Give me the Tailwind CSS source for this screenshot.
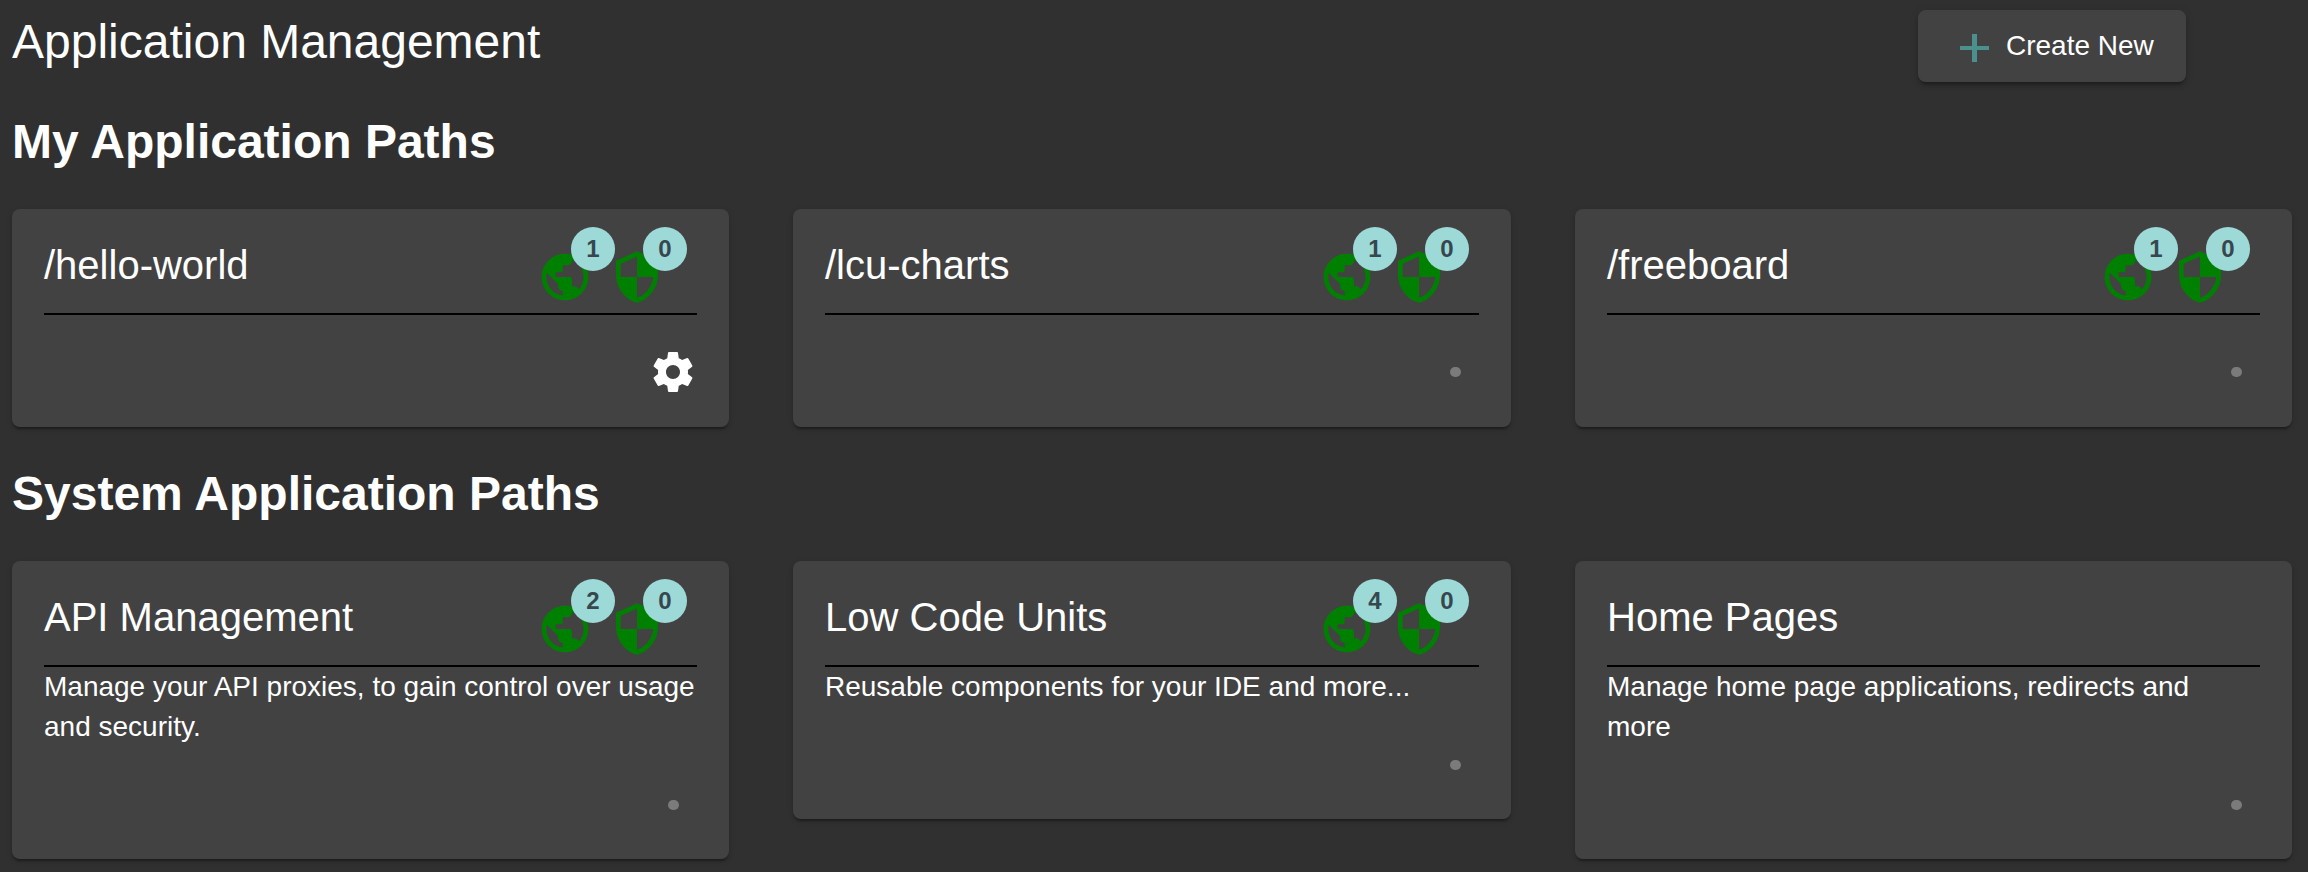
<!DOCTYPE html>
<html lang="en">
<head>
<meta charset="utf-8">
<title>Application Management</title>
<script src="https://cdn.jsdelivr.net/npm/@tailwindcss/browser@4"></script>
</head>
<body class="h-[872px] overflow-hidden bg-[#303030] font-['Liberation_Sans',Arial,sans-serif] text-white">
<svg class="hidden">
  <symbol id="globe" viewBox="0 0 24 24"><path d="M12 2C6.48 2 2 6.48 2 12s4.48 10 10 10 10-4.48 10-10S17.52 2 12 2zm-1 17.93c-3.95-.49-7-3.85-7-7.93 0-.62.08-1.21.21-1.79L9 15v1c0 1.1.9 2 2 2v1.93zm6.9-2.54c-.26-.81-1-1.39-1.9-1.39h-1v-3c0-.55-.45-1-1-1H8v-2h2c.55 0 1-.45 1-1V7h2c1.1 0 2-.9 2-2v-.41c2.93 1.19 5 4.06 5 7.41 0 2.08-.8 3.97-2.1 5.39z"/></symbol>
  <symbol id="shield" viewBox="0 0 24 24"><path d="M12 1L3 5v6c0 5.55 3.84 10.74 9 12 5.16-1.26 9-6.45 9-12V5l-9-4zm0 10.99h7c-.53 4.12-3.28 7.79-7 8.94V12H5V6.3l7-3.11v8.8z"/></symbol>
  <symbol id="gear" viewBox="0 0 24 24"><path d="M19.43 12.98c.04-.32.07-.64.07-.98s-.03-.66-.07-.98l2.11-1.65c.19-.15.24-.42.12-.64l-2-3.46c-.12-.22-.39-.3-.61-.22l-2.49 1c-.52-.4-1.08-.73-1.69-.98l-.38-2.65C14.46 2.18 14.25 2 14 2h-4c-.25 0-.46.18-.49.42l-.38 2.65c-.61.25-1.17.59-1.69.98l-2.49-1c-.23-.09-.49 0-.61.22l-2 3.46c-.13.22-.07.49.12.64l2.11 1.65c-.04.32-.07.65-.07.98s.03.66.07.98l-2.11 1.65c-.19.15-.24.42-.12.64l2 3.46c.12.22.39.3.61.22l2.49-1c.52.4 1.08.73 1.69.98l.38 2.65c.03.24.24.42.49.42h4c.25 0 .46-.18.49-.42l.38-2.65c.61-.25 1.17-.59 1.69-.98l2.49 1c.23.09.49 0 .61-.22l2-3.46c.12-.22.07-.49-.12-.64l-2.11-1.65zM12 15.5c-1.93 0-3.5-1.57-3.5-3.5s1.57-3.5 3.5-3.5 3.5 1.57 3.5 3.5-1.57 3.5-3.5 3.5z"/></symbol>
</svg>

<header class="flex h-[82px] items-start justify-between pt-[10px] pr-[122px] pl-3">
  <h1 class="pt-[4px] text-[48px] leading-[56px]">Application Management</h1>
  <button class="flex h-[72px] w-[268px] items-center rounded-lg bg-[#424242] pl-[42px] text-[28px] leading-[72px] shadow-[0_6px_2px_-4px_rgba(0,0,0,0.2),0_4px_4px_0_rgba(0,0,0,0.14),0_2px_10px_0_rgba(0,0,0,0.12)]">
    <svg class="mt-[4px] h-7 w-[29px] fill-[#4a918e]" viewBox="0 0 29 28"><path d="M12 0h5v12h12v4H17v12h-5V16H0v-4h12z"/></svg>
    <span class="ml-[17px]">Create New</span>
  </button>
</header>

<h2 class="mt-8 pl-3 text-[48px] leading-[56px] font-bold">My Application Paths</h2>
<section class="mt-[39px] ml-3 grid grid-cols-[717px_718px_717px] items-start gap-x-16">
  <article class="h-[218px] rounded-lg bg-[#424242] px-8 shadow-[0_4px_2px_-2px_rgba(0,0,0,0.2),0_2px_2px_0_rgba(0,0,0,0.14),0_2px_6px_0_rgba(0,0,0,0.12)]">
    <div class="flex h-[106px] justify-between border-b-2 border-black">
      <h3 class="pt-8 text-[40px] leading-[48px]">/hello-world</h3>
      <div class="flex gap-4 pt-10 pr-8">
        <div class="relative size-14"><svg class="size-14 fill-[#008000]"><use href="#globe"/></svg><span class="absolute -top-[22px] -right-[22px] size-11 rounded-full bg-[#9dd9d7] text-center text-[24px] leading-[44px] font-bold text-[#37474f]">1</span></div>
        <div class="relative size-14"><svg class="size-14 fill-[#008000]"><use href="#shield"/></svg><span class="absolute -top-[22px] -right-[22px] size-11 rounded-full bg-[#9dd9d7] text-center text-[24px] leading-[44px] font-bold text-[#37474f]">0</span></div>
      </div>
    </div>
    <div class="flex justify-end pt-[33px]"><svg class="size-12 fill-white"><use href="#gear"/></svg></div>
  </article>
  <article class="h-[218px] rounded-lg bg-[#424242] px-8 shadow-[0_4px_2px_-2px_rgba(0,0,0,0.2),0_2px_2px_0_rgba(0,0,0,0.14),0_2px_6px_0_rgba(0,0,0,0.12)]">
    <div class="flex h-[106px] justify-between border-b-2 border-black">
      <h3 class="pt-8 text-[40px] leading-[48px]">/lcu-charts</h3>
      <div class="flex gap-4 pt-10 pr-8">
        <div class="relative size-14"><svg class="size-14 fill-[#008000]"><use href="#globe"/></svg><span class="absolute -top-[22px] -right-[22px] size-11 rounded-full bg-[#9dd9d7] text-center text-[24px] leading-[44px] font-bold text-[#37474f]">1</span></div>
        <div class="relative size-14"><svg class="size-14 fill-[#008000]"><use href="#shield"/></svg><span class="absolute -top-[22px] -right-[22px] size-11 rounded-full bg-[#9dd9d7] text-center text-[24px] leading-[44px] font-bold text-[#37474f]">0</span></div>
      </div>
    </div>
    <div class="flex justify-end pt-[52px] pr-[18px]"><span class="h-2.5 w-[11px] rounded-full bg-[#7b7b7b]"></span></div>
  </article>
  <article class="h-[218px] rounded-lg bg-[#424242] px-8 shadow-[0_4px_2px_-2px_rgba(0,0,0,0.2),0_2px_2px_0_rgba(0,0,0,0.14),0_2px_6px_0_rgba(0,0,0,0.12)]">
    <div class="flex h-[106px] justify-between border-b-2 border-black">
      <h3 class="pt-8 text-[40px] leading-[48px]">/freeboard</h3>
      <div class="flex gap-4 pt-10 pr-8">
        <div class="relative size-14"><svg class="size-14 fill-[#008000]"><use href="#globe"/></svg><span class="absolute -top-[22px] -right-[22px] size-11 rounded-full bg-[#9dd9d7] text-center text-[24px] leading-[44px] font-bold text-[#37474f]">1</span></div>
        <div class="relative size-14"><svg class="size-14 fill-[#008000]"><use href="#shield"/></svg><span class="absolute -top-[22px] -right-[22px] size-11 rounded-full bg-[#9dd9d7] text-center text-[24px] leading-[44px] font-bold text-[#37474f]">0</span></div>
      </div>
    </div>
    <div class="flex justify-end pt-[52px] pr-[18px]"><span class="h-2.5 w-[11px] rounded-full bg-[#7b7b7b]"></span></div>
  </article>
</section>

<h2 class="mt-[39px] pl-3 text-[48px] leading-[56px] font-bold">System Application Paths</h2>
<section class="mt-[39px] ml-3 grid grid-cols-[717px_718px_717px] items-start gap-x-16">
  <article class="h-[298px] rounded-lg bg-[#424242] px-8 shadow-[0_4px_2px_-2px_rgba(0,0,0,0.2),0_2px_2px_0_rgba(0,0,0,0.14),0_2px_6px_0_rgba(0,0,0,0.12)]">
    <div class="flex h-[106px] justify-between border-b-2 border-black">
      <h3 class="pt-8 text-[40px] leading-[48px]">API Management</h3>
      <div class="flex gap-4 pt-10 pr-8">
        <div class="relative size-14"><svg class="size-14 fill-[#008000]"><use href="#globe"/></svg><span class="absolute -top-[22px] -right-[22px] size-11 rounded-full bg-[#9dd9d7] text-center text-[24px] leading-[44px] font-bold text-[#37474f]">2</span></div>
        <div class="relative size-14"><svg class="size-14 fill-[#008000]"><use href="#shield"/></svg><span class="absolute -top-[22px] -right-[22px] size-11 rounded-full bg-[#9dd9d7] text-center text-[24px] leading-[44px] font-bold text-[#37474f]">0</span></div>
      </div>
    </div>
    <p class="text-[28px] leading-10">Manage your API proxies, to gain control over usage and security.</p>
    <div class="flex justify-end pt-[53px] pr-[18px]"><span class="h-2.5 w-[11px] rounded-full bg-[#7b7b7b]"></span></div>
  </article>
  <article class="h-[258px] rounded-lg bg-[#424242] px-8 shadow-[0_4px_2px_-2px_rgba(0,0,0,0.2),0_2px_2px_0_rgba(0,0,0,0.14),0_2px_6px_0_rgba(0,0,0,0.12)]">
    <div class="flex h-[106px] justify-between border-b-2 border-black">
      <h3 class="pt-8 text-[40px] leading-[48px]">Low Code Units</h3>
      <div class="flex gap-4 pt-10 pr-8">
        <div class="relative size-14"><svg class="size-14 fill-[#008000]"><use href="#globe"/></svg><span class="absolute -top-[22px] -right-[22px] size-11 rounded-full bg-[#9dd9d7] text-center text-[24px] leading-[44px] font-bold text-[#37474f]">4</span></div>
        <div class="relative size-14"><svg class="size-14 fill-[#008000]"><use href="#shield"/></svg><span class="absolute -top-[22px] -right-[22px] size-11 rounded-full bg-[#9dd9d7] text-center text-[24px] leading-[44px] font-bold text-[#37474f]">0</span></div>
      </div>
    </div>
    <p class="text-[28px] leading-10">Reusable components for your IDE and more...</p>
    <div class="flex justify-end pt-[53px] pr-[18px]"><span class="h-2.5 w-[11px] rounded-full bg-[#7b7b7b]"></span></div>
  </article>
  <article class="h-[298px] rounded-lg bg-[#424242] px-8 shadow-[0_4px_2px_-2px_rgba(0,0,0,0.2),0_2px_2px_0_rgba(0,0,0,0.14),0_2px_6px_0_rgba(0,0,0,0.12)]">
    <div class="h-[106px] border-b-2 border-black">
      <h3 class="pt-8 text-[40px] leading-[48px]">Home Pages</h3>
    </div>
    <p class="text-[28px] leading-10">Manage home page applications, redirects and more</p>
    <div class="flex justify-end pt-[53px] pr-[18px]"><span class="h-2.5 w-[11px] rounded-full bg-[#7b7b7b]"></span></div>
  </article>
</section>
</body>
</html>
